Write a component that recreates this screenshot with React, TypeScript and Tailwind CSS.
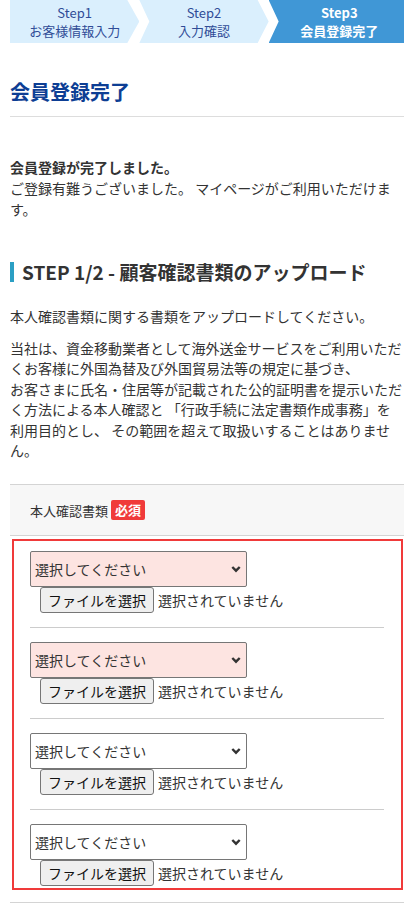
import React from 'react';

const steps = [
  { no: 'Step1', label: 'お客様情報入力', active: false, first: true },
  { no: 'Step2', label: '入力確認', active: false, first: false },
  { no: 'Step3', label: '会員登録完了', active: true, first: false },
];

const uploads = [{ error: true }, { error: true }, { error: false }, { error: false }];

const StepBar = () => (
  <div className="flex h-[43px] mx-[10px]">
    {steps.map((s) => (
      <div
        key={s.no}
        className={`flex-1 flex flex-col items-center justify-center text-[13px] leading-[18px] ${
          s.active ? 'bg-[#4097d6] text-white font-bold' : 'bg-[#daeffd] text-[#2f4c97]'
        } ${
          s.first
            ? '[clip-path:polygon(0_0,calc(100%-12px)_0,100%_50%,calc(100%-12px)_100%,0_100%)]'
            : s.active
              ? '[clip-path:polygon(0_0,100%_0,100%_100%,0_100%,10px_50%)] pl-[6px]'
              : '[clip-path:polygon(0_0,calc(100%-11px)_0,100%_50%,calc(100%-11px)_100%,0_100%,10px_50%)]'
        }`}
      >
        <span>{s.no}</span>
        <span>{s.label}</span>
      </div>
    ))}
  </div>
);

const Chevron = () => (
  <svg width="12" height="12" viewBox="0 0 12 12" className="shrink-0">
    <path d="M2.3 4 L6 7.7 L9.7 4" fill="none" stroke="#333" strokeWidth="2.4" />
  </svg>
);

const UploadRow = ({ error, first, last }: { error: boolean; first: boolean; last: boolean }) => (
  <div className={`${first ? 'pt-[10px]' : 'pt-[14px]'} ${last ? 'pb-[2px]' : 'pb-[14px] border-b border-[#cccccc]'}`}>
    <div
      className={`w-[217px] h-[36px] flex items-center justify-between pl-[4px] pr-[4px] border border-[#767676] rounded-[2px] text-[14px] text-[#333] ${
        error ? 'bg-[#fde4e1]' : 'bg-white'
      }`}
    >
      <span>選択してください</span>
      <Chevron />
    </div>
    <div className="flex items-center ml-[10px] h-[26px] text-[14px]">
      <div className="h-[26px] px-[7px] flex items-center bg-[#efefef] border border-[#767676] rounded-[3px] text-[#111]">
        ファイルを選択
      </div>
      <span className="ml-[4px] text-[#333]">選択されていません</span>
    </div>
  </div>
);

export default function App() {
  return (
    <div className="min-h-screen bg-white text-[#333] [font-family:'Noto_Sans_CJK_JP',sans-serif]">
      <StepBar />

      <div className="mx-[10px]">
        <h1 className="mt-[36px] pb-[11px] border-b border-[#dddddd] text-[20px] font-bold leading-[26px] text-[#0d3e94]">
          会員登録完了
        </h1>

        <div className="mt-[40px] text-[14px] leading-[21px]">
          <p className="font-bold">会員登録が完了しました。</p>
          <p>ご登録有難うございました。 マイページがご利用いただけます。</p>
        </div>

        <h2 className="mt-[40px] flex items-center text-[19px] font-bold leading-[24px] text-[#333]">
          <span className="w-[4px] h-[20px] bg-[#2b9fc4] mr-[8px]" />
          STEP 1/2 - 顧客確認書類のアップロード
        </h2>

        <p className="mt-[22px] text-[14px] leading-[20px]">本人確認書類に関する書類をアップロードしてください。</p>
        <p className="mt-[12px] text-[14px] leading-[20.4px]">
          当社は、資金移動業者として海外送金サービスをご利用いただくお客様に外国為替及び外国貿易法等の規定に基づき、
          <br />
          お客さまに氏名・住居等が記載された公的証明書を提示いただく方法による本人確認と 「行政手続に法定書類作成事務」を利用目的とし、 その範囲を超えて取扱いすることはありません。
        </p>

        <div className="mt-[24px] border-t border-b border-[#d4d4d4] bg-[#f7f7f7] h-[52px] flex items-center pl-[20px] text-[13px]">
          <span>本人確認書類</span>
          <span className="ml-[3px] bg-[#f03a3a] text-white font-bold text-[13px] leading-[20px] px-[4px] rounded-[2px]">
            必須
          </span>
        </div>

        <div className="mt-[3px] ml-[2px] mr-[1px] border-2 border-[#f03a3a] pl-[16px] pr-[17px]">
          {uploads.map((u, i) => (
            <UploadRow key={i} error={u.error} first={i === 0} last={i === uploads.length - 1} />
          ))}
        </div>

        <div className="mt-[12px] border-t border-[#d4d4d4]" />
      </div>
    </div>
  );
}
